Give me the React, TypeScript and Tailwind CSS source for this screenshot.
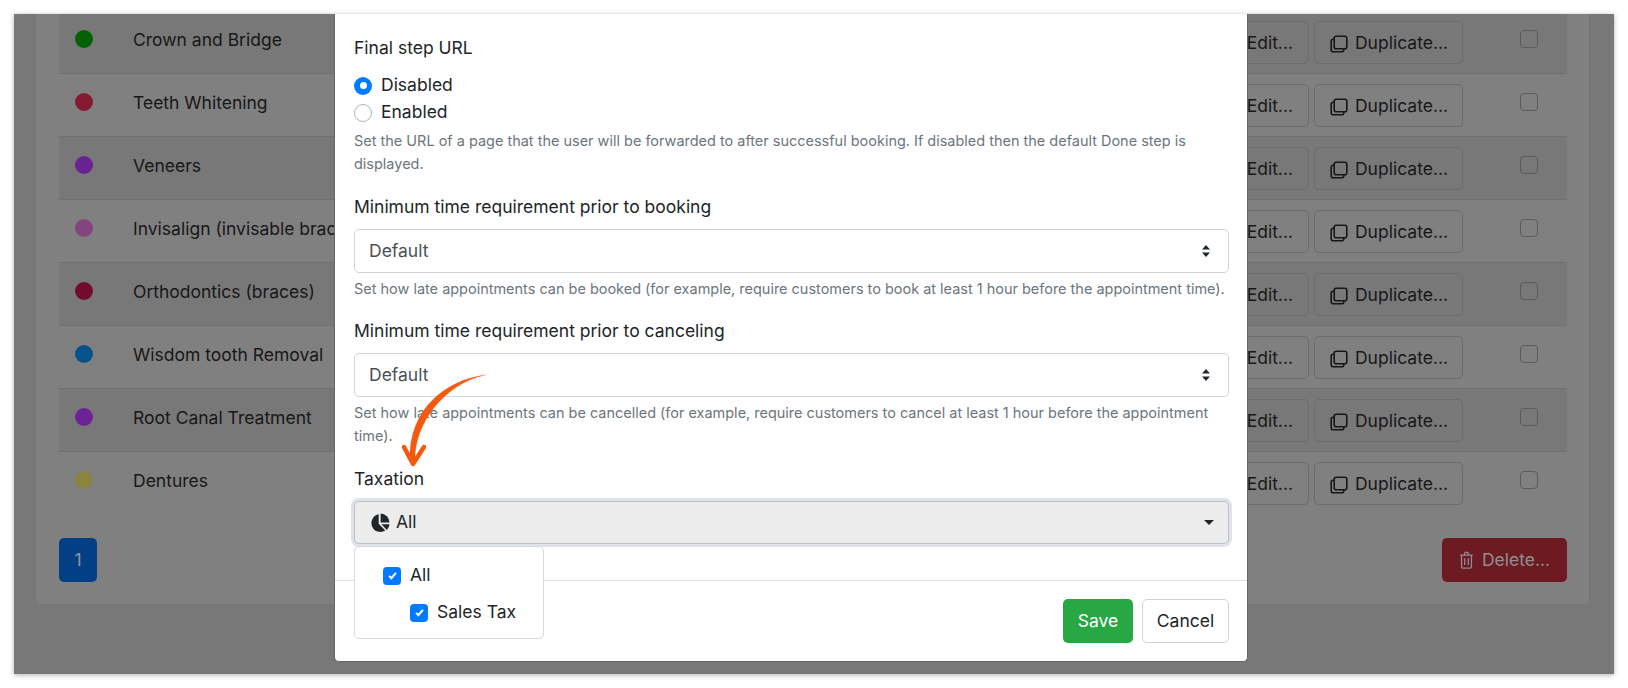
const rows = [
  { name: "Crown and Bridge", color: "bg-[#056105]" },
  { name: "Teeth Whitening", color: "bg-[#851b33]" },
  { name: "Veneers", color: "bg-[#6a2192]" },
  { name: "Invisalign (invisable braces)", color: "bg-[#83437f]" },
  { name: "Orthodontics (braces)", color: "bg-[#710b2f]" },
  { name: "Wisdom tooth Removal", color: "bg-[#06528a]" },
  { name: "Root Canal Treatment", color: "bg-[#6d2297]" },
  { name: "Dentures", color: "bg-[#8d8340]" },
];

function CopyIcon() {
  return (
    <svg viewBox="0 0 20 20" className="w-[20px] h-[20px] shrink-0" fill="none" stroke="currentColor" strokeWidth="1.6">
      <rect x="5.2" y="2.2" width="12.6" height="12.6" rx="2" />
      <path d="M5.2 5.2H4.2a2 2 0 0 0-2 2v8.6a2 2 0 0 0 2 2h8.6a2 2 0 0 0 2-2v-1" />
    </svg>
  );
}

function PencilIcon() {
  return (
    <svg viewBox="0 0 20 20" className="w-[20px] h-[20px] shrink-0" fill="none" stroke="currentColor" strokeWidth="1.6">
      <path d="M3 17l1-4L14 3l3 3L7 16z" />
    </svg>
  );
}

function TrashIcon() {
  return (
    <svg viewBox="0 0 16 20" className="w-[15px] h-[18px] shrink-0" fill="none" stroke="currentColor" strokeWidth="1.4">
      <path d="M1 4.5h14M5.5 4.5l1-3h3l1 3M2.5 4.5v13a1.5 1.5 0 0 0 1.5 1.5h8a1.5 1.5 0 0 0 1.5-1.5v-13M6 8v7.5M10 8v7.5" />
    </svg>
  );
}

function SelectArrows() {
  return (
    <svg viewBox="0 0 10 14" className="w-[10px] h-[14px] text-[#1f2730]" fill="currentColor">
      <path d="M5 1l4 4.5H1zM5 13L1 8.5h8z" />
    </svg>
  );
}

function PieIcon() {
  return (
    <svg viewBox="0 0 20 20" className="w-[20px] h-[20px] text-[#212529]" fill="currentColor">
      <path d="M8.7 1.2v9.6l6.6 6.8a9 9 0 1 1-6.6-16.4z" />
      <path d="M10.6 0.6a9 9 0 0 1 8.8 8.9h-8.8z" />
      <path d="M11.5 11.3h8a9 9 0 0 1-2.6 5.6z" />
    </svg>
  );
}

function Check() {
  return (
    <span className="w-[18px] h-[18px] rounded-[4px] bg-[#007bff] flex items-center justify-center shrink-0">
      <svg viewBox="0 0 12 12" className="w-[9px] h-[9px]" fill="none" stroke="#fff" strokeWidth="2.8">
        <path d="M1.5 6.5l3 3 6-7" />
      </svg>
    </span>
  );
}

function Help({ children }: { children: React.ReactNode }) {
  return <p className="text-[14.47px] leading-[23px] text-[#6c757d]">{children}</p>;
}

function Select({ label }: { label: string }) {
  return (
    <div className="h-[44px] rounded-[5px] border border-[#ced4da] bg-white flex items-center justify-between pl-[14px] pr-[17px] text-[#495057] text-[17.5px]">
      <span>{label}</span>
      <SelectArrows />
    </div>
  );
}

export default function App() {
  return (
    <div className="w-[1628px] h-[688px] bg-white p-[14px] font-['Inter','Liberation_Sans',sans-serif]">
      <div className="relative w-[1600px] h-[660px] overflow-hidden bg-[#787878] shadow-[0_1px_5px_rgba(0,0,0,0.3)]">
        <div className="ml-[21px] mr-[24px] -mt-[4px] h-[595px] rounded-[5px] border border-[#767676] bg-[#808080] pl-[23px] pr-[22px] pb-[22px] flex flex-col text-[#171717] text-[17.5px]">
          <div className="flex flex-col">
            {rows.map((r, i) => (
              <div
                key={r.name}
                className={
                  "h-[63px] flex items-start " +
                  (i < rows.length - 1 ? "border-b border-[#717171] " : "") +
                  (i % 2 === 0 ? "bg-[#787878]" : "")
                }
              >
                <span className={"w-[18px] h-[18px] rounded-full ml-[16px] mt-[19px] shrink-0 " + r.color} />
                <span className="ml-[40px] mt-[16px] leading-[26px] whitespace-nowrap">{r.name}</span>
                <div className="ml-auto flex items-start">
                  <div className="mt-[10px] pt-[2px] h-[43px] rounded-[5px] border border-[#6c6c6c] flex items-center px-[15px] gap-[6px] mr-[5px]">
                    <PencilIcon />
                    Edit...
                  </div>
                  <div className="mt-[10px] pt-[2px] h-[43px] w-[149px] rounded-[5px] border border-[#6c6c6c] flex items-center justify-center gap-[6px] whitespace-nowrap">
                    <CopyIcon />
                    Duplicate...
                  </div>
                  <span className="mt-[19px] ml-[57px] mr-[29px] w-[18px] h-[18px] rounded-[4px] border border-[#5b5b5b]" />
                </div>
              </div>
            ))}
          </div>
          <div className="mt-[23px] flex justify-between">
            <div className="w-[38px] h-[44px] rounded-[5px] bg-[#033f85] flex items-center justify-center text-[#8f959e]">1</div>
            <div className="w-[125px] h-[44px] rounded-[5px] bg-[#6e1a22] flex items-center justify-center gap-[8px] text-[#8f8f8f]">
              <TrashIcon />
              Delete...
            </div>
          </div>
        </div>

        <div className="absolute left-[320px] top-0 w-[914px] h-[648px] bg-white rounded-b-[5px] border-x border-b border-[#666666] flex flex-col text-[#212529] text-[17.5px]">
          <div className="flex-1 pl-[19px] pr-[18px] pt-[21px]">
            <div className="leading-[26px]">Final step URL</div>
            <div className="mt-[11px] flex flex-col">
              <div className="h-[27px] flex items-center gap-[9px]">
                <span className="w-[18px] h-[18px] rounded-full bg-[#007bff] flex items-center justify-center">
                  <span className="w-[7px] h-[7px] rounded-full bg-white" />
                </span>
                Disabled
              </div>
              <div className="h-[27px] flex items-center gap-[9px]">
                <span className="w-[18px] h-[18px] rounded-full border border-[#adb5bd] bg-white" />
                Enabled
              </div>
            </div>
            <div className="mt-[3px]">
              <Help>
                Set the URL of a page that the user will be forwarded to after successful booking. If disabled then the default Done step is displayed.
              </Help>
            </div>
            <div className="mt-[19px] leading-[26px]">Minimum time requirement prior to booking</div>
            <div className="mt-[9px]"><Select label="Default" /></div>
            <div className="mt-[4px]">
              <Help>Set how late appointments can be booked (for example, require customers to book at least 1 hour before the appointment time).</Help>
            </div>
            <div className="mt-[18px] leading-[26px]">Minimum time requirement prior to canceling</div>
            <div className="mt-[9px]"><Select label="Default" /></div>
            <div className="mt-[4px]">
              <Help>Set how late appointments can be cancelled (for example, require customers to cancel at least 1 hour before the appointment time).</Help>
            </div>
            <div className="mt-[19px] leading-[26px]">Taxation</div>
            <div className="mt-[9px] h-[43px] rounded-[5px] border border-[#b9c0c7] bg-[#ececec] shadow-[0_0_0_3px_#dfe3e7] flex items-center justify-between pl-[15px] pr-[14px]">
              <span className="flex items-center gap-[6px]"><PieIcon />All</span>
              <span className="w-0 h-0 border-x-[5px] border-x-transparent border-t-[5px] border-t-[#212529]" />
            </div>
          </div>
          <div className="h-[81px] border-t border-[#dee2e6] flex justify-end items-start pt-[18px] pr-[18px] gap-[9px]">
            <div className="w-[70px] h-[44px] rounded-[5px] bg-[#28a745] text-white flex items-center justify-center">Save</div>
            <div className="w-[87px] h-[44px] rounded-[5px] border border-[#ced4da] bg-white flex items-center justify-center">Cancel</div>
          </div>
          <div className="absolute left-[19px] top-[532px] w-[190px] h-[93px] rounded-[5px] border border-[#d6dbe0] bg-white pl-[28px] pt-[10px]">
            <div className="h-[37px] flex items-center gap-[9px]"><Check />All</div>
            <div className="h-[37px] flex items-center gap-[9px] pl-[27px]"><Check />Sales Tax</div>
          </div>
          <svg className="absolute left-[51px] top-[340px] w-[110px] h-[120px] pointer-events-none" viewBox="0 0 110 120" fill="none" stroke="#f25a10" strokeLinecap="round" strokeLinejoin="round">
            <path d="M99 21C60 26 22 55 24 107L29 107C28 70 58 30 99 21Z" fill="#f25a10" strokeWidth="0.3" />
            <path d="M18 93L27 110L38 93" strokeWidth="4.5" />
          </svg>
        </div>
      </div>
    </div>
  );
}
